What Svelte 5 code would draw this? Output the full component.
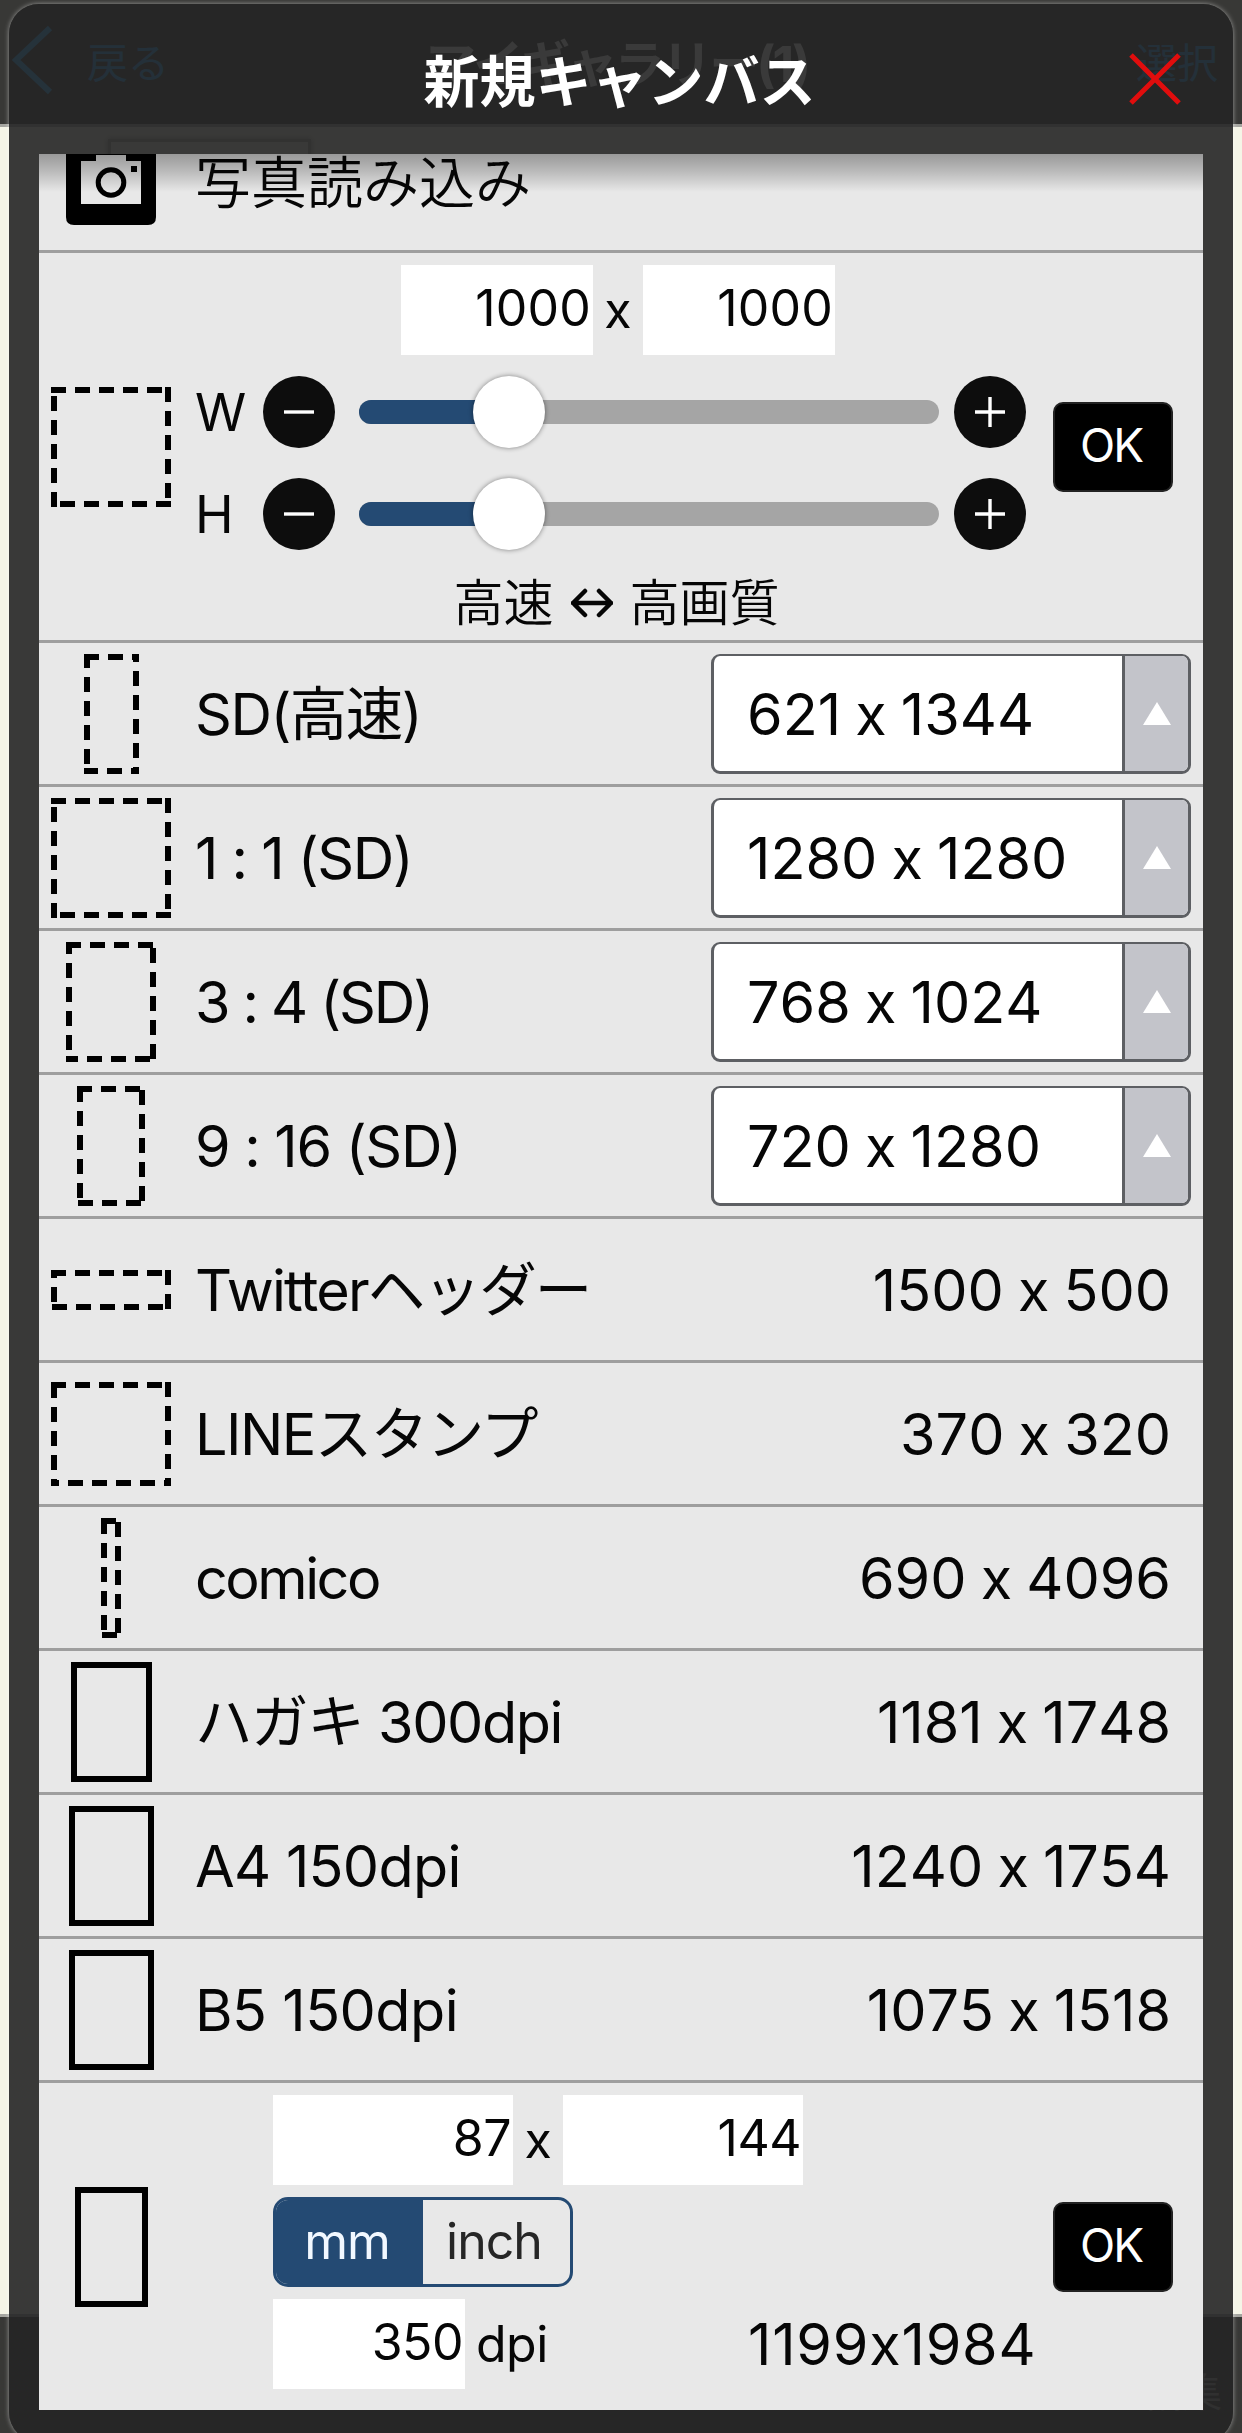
<script lang="ts">
  type Preset = {
    name: string;
    w: number;
    h: number;
    tracking?: number;
    select?: boolean;
    paper?: boolean;
  };

  const presets: Preset[] = [
    { name: "SD(高速)", w: 621, h: 1344, select: true },
    { name: "1 : 1 (SD)", w: 1280, h: 1280, select: true },
    { name: "3 : 4 (SD)", w: 768, h: 1024, tracking: -2.1, select: true },
    { name: "9 : 16 (SD)", w: 720, h: 1280, tracking: -1.3, select: true },
    { name: "Twitterヘッダー", w: 1500, h: 500, tracking: -1.8 },
    { name: "LINEスタンプ", w: 370, h: 320 },
    { name: "comico", w: 690, h: 4096, tracking: -2.5 },
    { name: "ハガキ 300dpi", w: 1181, h: 1748, tracking: -1.4, paper: true },
    { name: "A4 150dpi", w: 1240, h: 1754, tracking: -0.7, paper: true },
    { name: "B5 150dpi", w: 1075, h: 1518, tracking: -0.5, paper: true },
  ];

  const MAX_SIDE = 3600;

  let width = $state(1000);
  let height = $state(1000);
  let paperW = $state(87);
  let paperH = $state(144);
  let dpi = $state(350);
  let unit = $state("mm");

  let perUnit = $derived(unit === "mm" ? dpi / 25.4 : dpi);
  let pixels = $derived(
    `${Math.round(paperW * perUnit)}x${Math.round(paperH * perUnit)}`,
  );
</script>

<!-- outline with the proportions of the canvas, longest side 120 -->
{#snippet shape(w: number, h: number, dashed: boolean)}
  {@const k = 120 / Math.max(w, h)}
  <span class="shape">
    <svg width={Math.round(w * k)} height={Math.round(h * k)}>
      <rect
        width={Math.round(w * k)}
        height={Math.round(h * k)}
        fill="none"
        stroke="#000"
        stroke-width="12"
        stroke-dasharray={dashed ? "15 9" : undefined}
      />
    </svg>
  </span>
{/snippet}

{#snippet slider(label: string, value: number, change: (d: number) => void)}
  <div class="slider">
    <span class="axis">{label}</span>
    <button class="step" aria-label="{label} -" onclick={() => change(-1)}>
      <svg width="72" height="72"><path d="M21 36H51" /></svg>
    </button>
    <div class="track">
      <div class="fill" style="width: {(value / MAX_SIDE) * 93}%"></div>
      <div class="knob"></div>
    </div>
    <button class="step" aria-label="{label} +" onclick={() => change(1)}>
      <svg width="72" height="72"><path d="M21 36H51M36 21V51" /></svg>
    </button>
  </div>
{/snippet}

<div class="screen">
  <div class="gallery">
    <header class="navbar">
      <svg class="chevron" width="42" height="70" viewBox="0 0 42 70">
        <path d="M38 3L4 35L38 67" />
      </svg>
      <span class="back">戻る</span>
      <span class="heading">マイギャラリー(1)</span>
      <span class="choose">選択</span>
    </header>
    <div class="works"><div class="thumb"></div></div>
    <footer class="toolbar"><span>編集</span></footer>
  </div>

  <div class="dialog">
    <div class="titlebar">
      <h1>新規キャンバス</h1>
      <button class="close" aria-label="close">
        <svg width="54" height="54"><path d="M3 3L51 51M51 3L3 51" /></svg>
      </button>
    </div>

    <div class="sheet">
      <div class="row photo">
        <svg class="camera" width="90" height="71" viewBox="0 0 90 71">
          <path d="M0 0H90V63Q90 71 82 71H8Q0 71 0 63Z" />
          <path class="hole" d="M30 1H60V7H75V50H15V7H30Z" />
          <circle cx="45" cy="28.5" r="12.8" />
          <path d="M65 12h6v6h-6z" />
        </svg>
        <span class="name">写真読み込み</span>
      </div>

      <div class="row custom">
        {@render shape(width, height, true)}
        <div class="controls">
          <div class="sizes">
            <input class="field" bind:value={width} />
            <span class="times">x</span>
            <input class="field" bind:value={height} />
          </div>
          {@render slider("W", width, (d) => (width += d))}
          {@render slider("H", height, (d) => (height += d))}
          <div class="quality">
            <span>高速</span>
            <svg width="42" height="30" viewBox="0 0 42 30">
              <path d="M2 15H40M14 3L2 15L14 27M28 3L40 15L28 27" />
            </svg>
            <span>高画質</span>
          </div>
        </div>
        <button class="ok">OK</button>
      </div>

      {#each presets as p (p.name)}
        <div class="row">
          {@render shape(p.w, p.h, !p.paper)}
          <span class="name" style="letter-spacing: {p.tracking ?? -1.5}px">{p.name}</span>
          {#if p.select}
            <div class="select">
              <span class="value">{p.w} x {p.h}</span>
              <span class="arrow">
                <svg width="28" height="23"><path d="M14 0L28 23H0Z" /></svg>
              </span>
            </div>
          {:else}
            <span class="value">{p.w} x {p.h}</span>
          {/if}
        </div>
      {/each}

      <div class="row print">
        {@render shape(paperW, paperH, false)}
        <div class="paper">
          <div class="line">
            <input class="field wide" bind:value={paperW} />
            <span class="times">x</span>
            <input class="field wide" bind:value={paperH} />
          </div>
          <div class="segments">
            <button class:on={unit === "mm"} onclick={() => (unit = "mm")}>mm</button>
            <button class:on={unit === "inch"} onclick={() => (unit = "inch")}>inch</button>
          </div>
          <div class="line">
            <input class="field dpi" bind:value={dpi} />
            <span class="unit">dpi</span>
            <span class="pixels">{pixels}</span>
          </div>
        </div>
        <button class="ok">OK</button>
      </div>
      <div class="shade"></div>
    </div>
  </div>
</div>

<style>
  :global(body) {
    background: #383836;
  }
  * {
    box-sizing: border-box;
  }
  button,
  input {
    margin: 0;
    padding: 0;
    border: none;
    font: inherit;
    color: inherit;
    letter-spacing: inherit;
  }
  svg {
    display: block;
    flex: none;
  }
  .screen {
    display: grid;
    grid-template: 2433px / 1242px;
    overflow: hidden;
    font-family: Inter, "Noto Sans CJK JP", sans-serif;
    /* keeps Inter from turning the x between digits into a multiplication sign */
    font-feature-settings: "calt" 0;
    color: #060606;
  }
  .gallery,
  .dialog {
    grid-area: 1 / 1;
  }

  /* gallery behind the dialog */
  .gallery {
    display: flex;
    flex-direction: column;
    background: #383836;
  }
  .navbar {
    display: grid;
    grid-template-columns: 75px 339px 400px 1fr;
    align-items: center;
    height: 127px;
    padding: 0 24px 5px 12px;
    border-bottom: 3px solid #a5a5a0;
    color: #1f9cf0;
    font-size: 41px;
    font-weight: 400;
  }
  .chevron path {
    fill: none;
    stroke: #2aa8ff;
    stroke-width: 6;
  }
  .heading {
    color: #fff;
    font-size: 50px;
    font-weight: 700;
    letter-spacing: -2.8px;
    white-space: nowrap;
  }
  .choose {
    text-align: right;
  }
  .works {
    flex: 1;
    padding: 12px 108px;
    background: #f5f5e7;
  }
  .thumb {
    width: 203px;
    height: 200px;
    border: 3px solid #b0b0a6;
    box-shadow: 0 0 6px #888;
  }
  .toolbar {
    height: 119px;
    padding: 44px 20px 0 0;
    border-top: 3px solid #a5a5a0;
    color: #999;
    font-size: 40px;
    text-align: right;
  }

  .dialog {
    z-index: 1;
    height: 2438px;
    margin: 4px 9px 0;
    border-radius: 30px;
    background: rgba(37, 37, 37, 0.9);
    box-shadow: 0 0 5px rgba(255, 255, 255, 0.5);
  }
  .titlebar {
    display: grid;
    grid-template-columns: 1fr auto 1fr;
    align-items: center;
    height: 150px;
    padding: 0 51px 0 54px;
  }
  h1 {
    grid-column: 2;
    margin: 5px 0 0 -6px;
    color: #fff;
    font-size: 56px;
    font-weight: 700;
    line-height: 80px;
  }
  .close {
    justify-self: end;
    background: none;
  }
  .close path {
    stroke: #e00d0d;
    stroke-width: 5;
  }

  .sheet {
    position: relative;
    width: 1164px;
    height: 2256px;
    margin: 0 30px;
    background: #e8e8e8;
  }
  .shade {
    position: absolute;
    inset: 0 0 auto;
    height: 38px;
    background: linear-gradient(rgba(0, 0, 0, 0.34), rgba(0, 0, 0, 0.2) 45%, transparent);
  }
  .row {
    display: flex;
    align-items: center;
    height: 144px;
    padding: 1px 12px 0;
    border-bottom: 3px solid #9e9e9e;
  }
  .shape {
    display: flex;
    justify-content: center;
    width: 120px;
    flex: none;
  }
  .name {
    flex: 1;
    margin-left: 24px;
    font-size: 57.5px;
    line-height: 80px;
    white-space: nowrap;
  }
  .value {
    padding-right: 20px;
    font-size: 57.5px;
    font-kerning: none;
    word-spacing: -2px;
    line-height: 80px;
    white-space: nowrap;
  }

  .photo {
    align-items: flex-start;
    height: 99px;
    padding: 0 27px;
  }
  .camera .hole {
    fill: #e8e8e8;
  }
  .camera circle {
    fill: none;
    stroke: #000;
    stroke-width: 5;
  }
  .photo .name {
    margin: -11px 0 0 39px;
    font-size: 56px;
    font-weight: 350;
  }

  .select {
    display: flex;
    width: 480px;
    height: 120px;
    border: 3px solid #5d5f63;
    border-top-width: 2px;
    border-radius: 9px;
    background: #fff;
    overflow: hidden;
  }
  .select .value {
    flex: 1;
    padding-left: 33px;
    line-height: 116px;
  }
  .arrow {
    display: flex;
    align-items: center;
    justify-content: center;
    width: 66px;
    border-left: 3px solid #5d5f63;
    background: #c3c4ca;
  }
  .arrow path {
    fill: #fff;
  }

  .field {
    width: 192px;
    height: 90px;
    padding: 0 2px 4px 0;
    border-radius: 0;
    background: #fff;
    text-align: right;
  }
  .wide {
    width: 240px;
  }
  .times {
    width: 50px;
    text-align: center;
  }
  .custom {
    height: 390px;
    padding: 0 30px 0 12px;
    font-size: 50px;
    letter-spacing: 0.2px;
  }
  .controls {
    display: flex;
    flex-direction: column;
    align-self: stretch;
    width: 846px;
    margin: 12px 12px 0 24px;
  }
  .sizes {
    display: flex;
    align-items: center;
    justify-content: center;
    margin-bottom: 21px;
  }
  .slider {
    display: flex;
    align-items: center;
    height: 72px;
    margin-bottom: 30px;
  }
  .axis {
    width: 68px;
    font-size: 52px;
    letter-spacing: -1px;
  }
  .step {
    width: 72px;
    height: 72px;
    border-radius: 50%;
    background: #0d0d0d;
  }
  .step path {
    stroke: #fff;
    stroke-width: 3.4;
  }
  .track {
    display: flex;
    align-items: center;
    width: 580px;
    height: 24px;
    margin: 0 15px 0 24px;
    border-radius: 12px;
    background: #a5a5a5;
  }
  .fill {
    height: 24px;
    border-radius: 12px 0 0 12px;
    background: #244a73;
  }
  .knob {
    width: 72px;
    height: 72px;
    margin-left: -36px;
    border-radius: 50%;
    background: #fff;
    box-shadow: 0 0 5px rgba(0, 0, 0, 0.45);
  }
  .quality {
    display: flex;
    align-items: center;
    justify-content: center;
    gap: 17px;
    margin: -7px 3px 0 0;
    font-size: 50px;
    font-weight: 350;
    letter-spacing: 0;
    line-height: 60px;
  }
  .quality path {
    fill: none;
    stroke: #060606;
    stroke-width: 4.5;
    stroke-linecap: round;
    stroke-linejoin: round;
  }
  .ok {
    width: 120px;
    height: 90px;
    padding: 0 4px 3px 0;
    border: 2px solid #222;
    border-radius: 10px;
    background: #000;
    color: #fff;
    font-size: 46px;
    letter-spacing: -2px;
  }

  .print {
    height: 327px;
    padding: 0 30px 0 12px;
    border-bottom: none;
    font-size: 50px;
    letter-spacing: -0.5px;
  }
  .paper {
    display: flex;
    flex-direction: column;
    gap: 12px;
    width: 780px;
    margin: -9px 0 0 102px;
  }
  .line {
    display: flex;
    align-items: center;
  }
  .segments {
    display: flex;
    width: 300px;
    height: 90px;
    border: 3px solid #244a73;
    border-radius: 15px;
    overflow: hidden;
  }
  .segments button {
    flex: 1;
    padding: 0 5px 2px 0;
    background: none;
    color: #262626;
    letter-spacing: -1px;
  }
  .segments .on {
    background: #244a73;
    color: #f2f8ff;
  }
  .unit {
    width: 283px;
    padding-left: 11px;
  }
  .pixels {
    font-size: 57.5px;
    font-kerning: none;
    letter-spacing: 0.8px;
  }
</style>
